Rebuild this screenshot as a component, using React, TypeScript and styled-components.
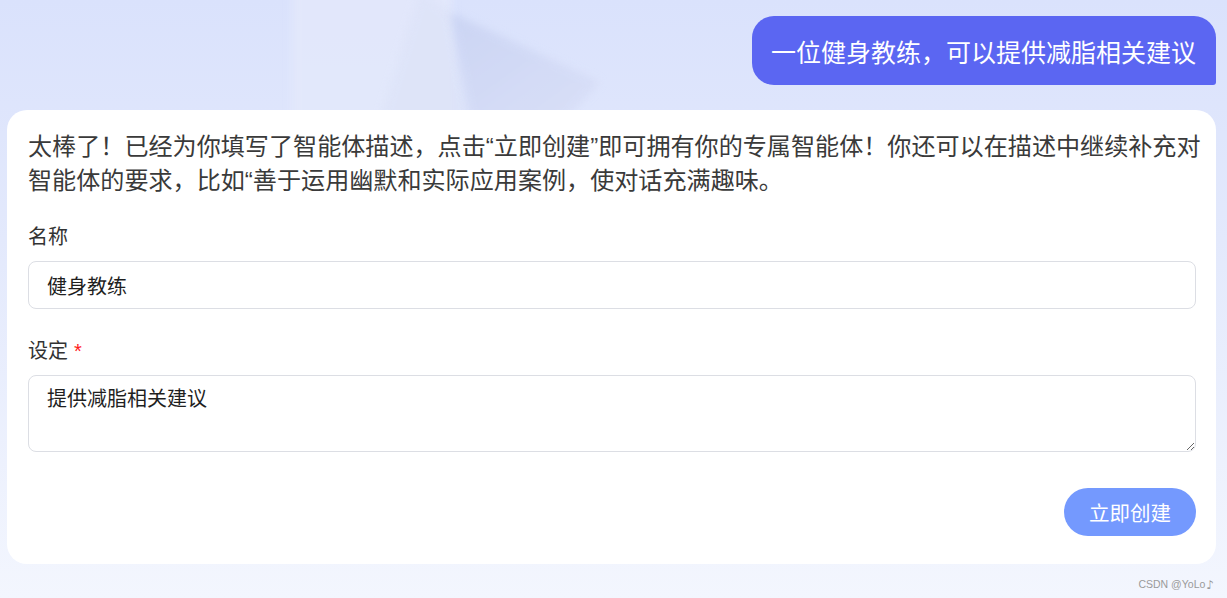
import styled, { createGlobalStyle } from "styled-components"

const GlobalStyle = createGlobalStyle`
  html, body {
    margin: 0;
    padding: 0;
  }
  body {
    font-family: "Liberation Sans", "Noto Sans CJK SC", sans-serif;
    color: #333;
  }
  * {
    box-sizing: border-box;
  }
`

const Page = styled.div`
  position: relative;
  height: 100vh;
  overflow: hidden;
  padding: 16px 11px 0 7px;
  display: flex;
  flex-direction: column;
  background: linear-gradient(180deg, #dae2fc 0%, #e3e9fc 40%, #f3f6fe 100%);
`

const Decor = styled.svg`
  position: absolute;
  left: 0;
  top: 0;
  pointer-events: none;
`

const Bubble = styled.div`
  position: relative;
  align-self: flex-end;
  height: 69px;
  padding: 0 20px 0 19px;
  display: flex;
  align-items: center;
  background: #5b66f2;
  color: #fff;
  font-size: 25px;
  border-radius: 22px 22px 3px 22px;
`

const Card = styled.div`
  position: relative;
  margin-top: 25px;
  background: #fff;
  border-radius: 20px;
  padding: 20px 20px 28px 21px;
  display: flex;
  flex-direction: column;
`

const Intro = styled.p`
  margin: 0;
  font-size: 24.1px;
  line-height: 33.5px;
  color: #3a3a3a;
  white-space: nowrap;
`

const Label = styled.div<{ $gap?: number }>`
  margin-top: ${p => p.$gap ?? 26}px;
  font-size: 20px;
  line-height: 28px;
  color: #333;
`

const Star = styled.span`
  color: #ff1a1a;
  margin-left: 6px;
`

const Field = styled.div<{ $tall?: boolean }>`
  margin-top: 10px;
  height: ${p => (p.$tall ? "77px" : "48px")};
  display: flex;
`

const TextInput = styled.input`
  flex: 1;
  border: 1px solid #dcdee4;
  border-radius: 8px;
  padding: 0 18px;
  font-family: inherit;
  font-size: 20px;
  color: #1f1f1f;
  outline: none;
`

const TextArea = styled.textarea`
  flex: 1;
  border: 1px solid #dcdee4;
  border-radius: 8px;
  padding: 9px 18px;
  font-family: inherit;
  font-size: 20px;
  line-height: 28px;
  color: #1f1f1f;
  outline: none;
  resize: vertical;
`

const Actions = styled.div`
  margin-top: 36px;
  display: flex;
  justify-content: flex-end;
`

const CreateButton = styled.button`
  width: 132px;
  height: 48px;
  border: none;
  border-radius: 24px;
  background: #7499fe;
  color: #fff;
  font-family: inherit;
  font-size: 20.5px;
  cursor: pointer;
`

const Footer = styled.div`
  display: flex;
  justify-content: flex-end;
  padding: 14px 2px 0 0;
  font-family: "Liberation Sans", sans-serif;
  font-size: 10.5px;
  color: #9a9a9a;
`

const Note = styled.span`
  font-family: "DejaVu Sans", sans-serif;
  font-size: 12px;
  margin-left: 1px;
`

const App = () => {
  return (
    <>
      <GlobalStyle />
      <Page>
        <Decor width="700" height="120" viewBox="0 0 700 120">
          <defs>
            <filter id="soft" x="-20%" y="-20%" width="140%" height="140%">
              <feGaussianBlur stdDeviation="4" />
            </filter>
            <linearGradient id="fold" x1="0" y1="0" x2="1" y2="1">
              <stop offset="0" stopColor="#c6d0f1" />
              <stop offset="1" stopColor="#d8def6" />
            </linearGradient>
          </defs>
          <rect x="292" y="-10" width="160" height="130" fill="#e4e9fb" opacity="0.8" filter="url(#soft)" />
          <polygon points="420,-10 450,12 470,120 380,120" fill="#dde3f8" opacity="0.7" filter="url(#soft)" />
          <polygon points="450,12 600,82 565,120 470,120" fill="url(#fold)" opacity="0.75" filter="url(#soft)" />
        </Decor>
        <Bubble>一位健身教练，可以提供减脂相关建议</Bubble>
        <Card>
          <Intro>
            太棒了！已经为你填写了智能体描述，点击“立即创建”即可拥有你的专属智能体！你还可以在描述中继续补充对
            <br />
            智能体的要求，比如“善于运用幽默和实际应用案例，使对话充满趣味。
          </Intro>
          <Label>名称</Label>
          <Field>
            <TextInput defaultValue="健身教练" />
          </Field>
          <Label $gap={28}>
            设定<Star>*</Star>
          </Label>
          <Field $tall>
            <TextArea defaultValue="提供减脂相关建议" />
          </Field>
          <Actions>
            <CreateButton>立即创建</CreateButton>
          </Actions>
        </Card>
        <Footer>
          CSDN @YoLo<Note>♪</Note>
        </Footer>
      </Page>
    </>
  )
}

export default App
